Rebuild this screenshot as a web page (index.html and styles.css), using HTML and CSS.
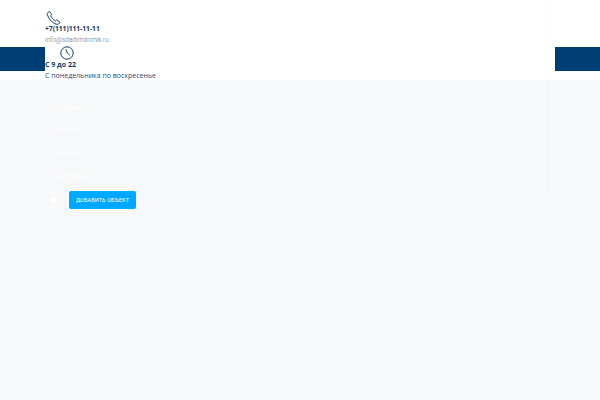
FILE: index.html
```html
<!DOCTYPE html>
<html lang="ru">
<head>
<meta charset="utf-8">
<title>Сдадим домик</title>
<link rel="stylesheet" href="styles.css">
</head>
<body>
<header class="header">
  <div class="bar">
    <div class="bar-seg"></div>
    <div class="bar-seg"></div>
  </div>
</header>
<div class="panel">
  <div class="contacts">
    <svg class="icon icon-phone" viewBox="0 0 16 16" width="15" height="14" fill="none" stroke="#0c3c66" stroke-width="1.100" stroke-linejoin="round"><path d="M1.600 1.600 3.500.7 6 4 4.700 5.300c.9 2.400 2.800 4.600 5.500 6l1.500-1.200 3.600 2.600-1 1.600c-.6.900-2 1.200-3.200.8C6.500 13.500 2.300 9 .9 4.300.6 3.200.8 2.200 1.600 1.600Z"/></svg>
    <div class="phone">+7(111)111-11-11</div>
    <div class="email">info@sdadimdomik.ru</div>
    <svg class="icon icon-clock" viewBox="0 0 14 14" width="14" height="14" fill="none" stroke="#0c3c66" stroke-width="1"><circle cx="7" cy="7" r="6.200"/><path d="M6 3.500 7.300 7l2.500 2.300"/></svg>
    <div class="hours">С 9 до 22</div>
    <div class="days">С понедельника по воскресенье</div>
  </div>
  <div class="lower">
    <nav class="menu">
      <a class="menu-item">Главная</a>
      <a class="menu-item">Объекты</a>
      <a class="menu-item">Услуги</a>
      <a class="menu-item">Контакты</a>
    </nav>
    <div class="actions">
      <span class="user-dot"></span>
      <a class="add-btn">ДОБАВИТЬ ОБЪЕКТ</a>
    </div>
  </div>
</div>
</body>
</html>
```
FILE: styles.css
```css
* { box-sizing: border-box; }
html, body { margin: 0; height: 100%; }
body {
  background: #f6f8fa;
  font-family: "Open Sans", "Noto Sans", sans-serif;
  color: #0c3c66;
  overflow: hidden;
}
.header {
  height: 80px;
  background: #fff;
  padding-top: 47px;
}
.bar {
  display: flex;
  justify-content: space-between;
}
.bar-seg {
  width: 45px;
  height: 24px;
  background: #003f75;
}
.panel {
  position: absolute;
  top: 0;
  left: 45px;
  width: 504px;
}
.contacts {
  display: flex;
  flex-direction: column;
  align-items: flex-start;
  padding-top: 11px;
  height: 80px;
  background: #fff;
  border-right: 1px solid #fbfcfc;
}
.icon { display: block; flex-shrink: 0; }
.icon-phone { margin-left: 1px; }
.icon-clock { margin: 0 0 0 15px; }
.phone {
  font-size: 6.700px;
  font-weight: 700;
  line-height: 10px;
  margin-top: -1px;
  white-space: nowrap;
}
.email {
  font-family: Roboto, sans-serif;
  font-weight: 300;
  font-size: 6.600px;
  line-height: 10px;
  margin: 1px 0 1px;
  color: #557389;
}
.hours {
  font-size: 7px;
  font-weight: 700;
  line-height: 10px;
}
.days {
  font-size: 7px;
  line-height: 10px;
  margin-top: 1px;
  color: #1e4e78;
}
.lower {
  height: 108px;
  border-right: 1px solid #eff1f4;
  padding: 21px 0 0 6px;
}
.menu {
  display: flex;
  flex-direction: column;
  gap: 12px;
}
.menu-item {
  font-family: Roboto, sans-serif;
  font-size: 8px;
  line-height: 11px;
  color: #fff;
}
.actions {
  display: flex;
  align-items: center;
  gap: 13px;
  margin: 10px 0 0 -1px;
  height: 18px;
}
.user-dot {
  width: 6px;
  height: 6px;
  border-radius: 50%;
  background: #fff;
}
.add-btn {
  display: block;
  width: 67px;
  height: 18px;
  background: #00a8ff;
  border-radius: 2px;
  color: #fff;
  font-family: Roboto, sans-serif;
  font-size: 5.500px;
  line-height: 18px;
  text-align: center;
  letter-spacing: 0.1px;
}
```
